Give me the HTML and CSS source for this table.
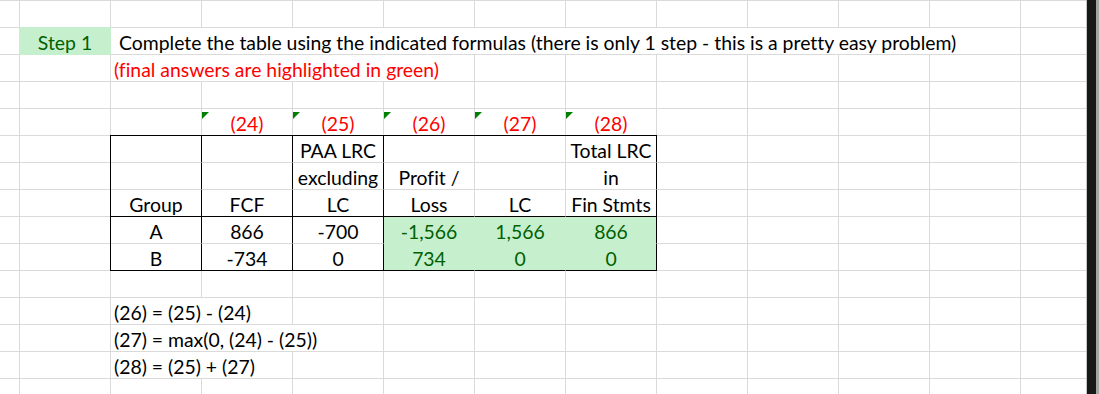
FILE: index.html
```html
<!DOCTYPE html>
<html lang="en">
<head>
<meta charset="utf-8">
<title>Step 1</title>
<link rel="stylesheet" href="styles.css">
</head>
<body>
<div class="screen">
  <div class="sheet">
    <div class="grid">
      <div class="step">Step 1</div>
      <div class="intro">Complete the table using the indicated formulas (there is only 1 step - this is a pretty easy problem)</div>
      <div class="note">(final answers are highlighted in green)</div>

      <div class="refs">
        <div class="ref">(24)</div>
        <div class="ref">(25)</div>
        <div class="ref">(26)</div>
        <div class="ref">(27)</div>
        <div class="ref">(28)</div>
      </div>

      <div class="table">
        <div class="td br"></div>
        <div class="td br"></div>
        <div class="td br">PAA LRC</div>
        <div class="td"></div>
        <div class="td"></div>
        <div class="td br">Total LRC</div>

        <div class="td br"></div>
        <div class="td br"></div>
        <div class="td br">excluding</div>
        <div class="td">Profit /</div>
        <div class="td"></div>
        <div class="td br">in</div>

        <div class="td br bb">Group</div>
        <div class="td br bb">FCF</div>
        <div class="td br bb">LC</div>
        <div class="td bb">Loss</div>
        <div class="td bb">LC</div>
        <div class="td br bb">Fin Stmts</div>

        <div class="td br">A</div>
        <div class="td br">866</div>
        <div class="td br">-700</div>
        <div class="td good">-1,566</div>
        <div class="td good">1,566</div>
        <div class="td good br">866</div>

        <div class="td br bb">B</div>
        <div class="td br bb">-734</div>
        <div class="td br bb">0</div>
        <div class="td good bb">734</div>
        <div class="td good bb">0</div>
        <div class="td good br bb">0</div>
      </div>

      <div class="formula f1">(26) = (25) - (24)</div>
      <div class="formula f2">(27) = max(0, (24) - (25))</div>
      <div class="formula f3">(28) = (25) + (27)</div>
    </div>
  </div>
  <div class="edge"></div>
</div>
</body>
</html>
```

FILE: styles.css
```css
html, body {
  margin: 0;
  padding: 0;
  background: #ffffff;
}

body {
  font-family: Lato, "Open Sans", sans-serif;
  font-size: 19.4px;
  font-variant-ligatures: none;
  color: #000000;
}

.screen {
  display: flex;
  width: 1099px;
  height: 394px;
  overflow: hidden;
}

.sheet {
  flex: 1;
  min-width: 0;
  overflow: hidden;
  background-color: #ffffff;
  background-image:
    linear-gradient(to right, #dadada 1px, transparent 1px),
    linear-gradient(to bottom, #dadada 1px, transparent 1px);
  background-size: 91px 100%, 100% 27px;
  background-position: 19px 0, 0 0;
  background-repeat: repeat-x, repeat-y;
}

.grid {
  display: grid;
  padding-top: 1px;
  grid-template-columns: 19px repeat(12, 90px);
  grid-template-rows: repeat(15, 26px);
  gap: 1px;
  width: max-content;
}

.grid > div {
  display: flex;
  align-items: flex-end;
  white-space: nowrap;
  line-height: normal;
}

.step {
  grid-row: 2;
  grid-column: 2;
  margin: -1px -1px -1px -1px;
  padding-bottom: 1px;
  justify-content: center;
  background: #c6efce;
  color: #006100;
}

.intro {
  grid-row: 2;
  grid-column: 3 / 13;
  background: #ffffff;
  padding-left: 8px;
}

.note {
  grid-row: 3;
  grid-column: 3 / 7;
  background: #ffffff;
  padding-left: 3px;
  color: #ff0000;
}

.grid > .refs {
  grid-row: 5;
  grid-column: 4 / 9;
  display: grid;
  grid-template-columns: repeat(5, 90px);
  column-gap: 1px;
}

.ref {
  position: relative;
  display: flex;
  align-items: flex-end;
  justify-content: center;
  color: #ff0000;
}

.ref::before {
  content: "";
  position: absolute;
  top: 0;
  left: 0;
  width: 0;
  height: 0;
  border-top: 7px solid #007f00;
  border-right: 7px solid transparent;
}

.grid > .table {
  grid-row: 6 / 11;
  grid-column: 3 / 9;
  margin: -1px;
  display: grid;
  grid-template-columns: repeat(6, 91px);
  grid-auto-rows: 27px;
  border-top: 1px solid #000000;
  border-left: 1px solid #000000;
  align-items: stretch;
}

.td {
  box-sizing: border-box;
  display: flex;
  align-items: flex-end;
  justify-content: center;
  border-right: 1px solid #dadada;
  border-bottom: 1px solid #dadada;
  white-space: nowrap;
}

.good {
  background: #c6efce;
  color: #006100;
  border-right-color: #c6efce;
  border-bottom-color: #c6efce;
}

.br {
  border-right-color: #000000;
}

.bb {
  border-bottom-color: #000000;
}

.formula {
  grid-column: 3 / 5;
  background: #ffffff;
  padding-left: 3px;
}

.f1 { grid-row: 12; }
.f2 { grid-row: 13; grid-column: 3 / 6; }
.f3 { grid-row: 14; }

.edge {
  flex: 0 0 13px;
  box-sizing: border-box;
  border-left: 1px solid #c4c4c4;
  border-right: 3px solid #a3a3a3;
  background: #181818;
}
```
